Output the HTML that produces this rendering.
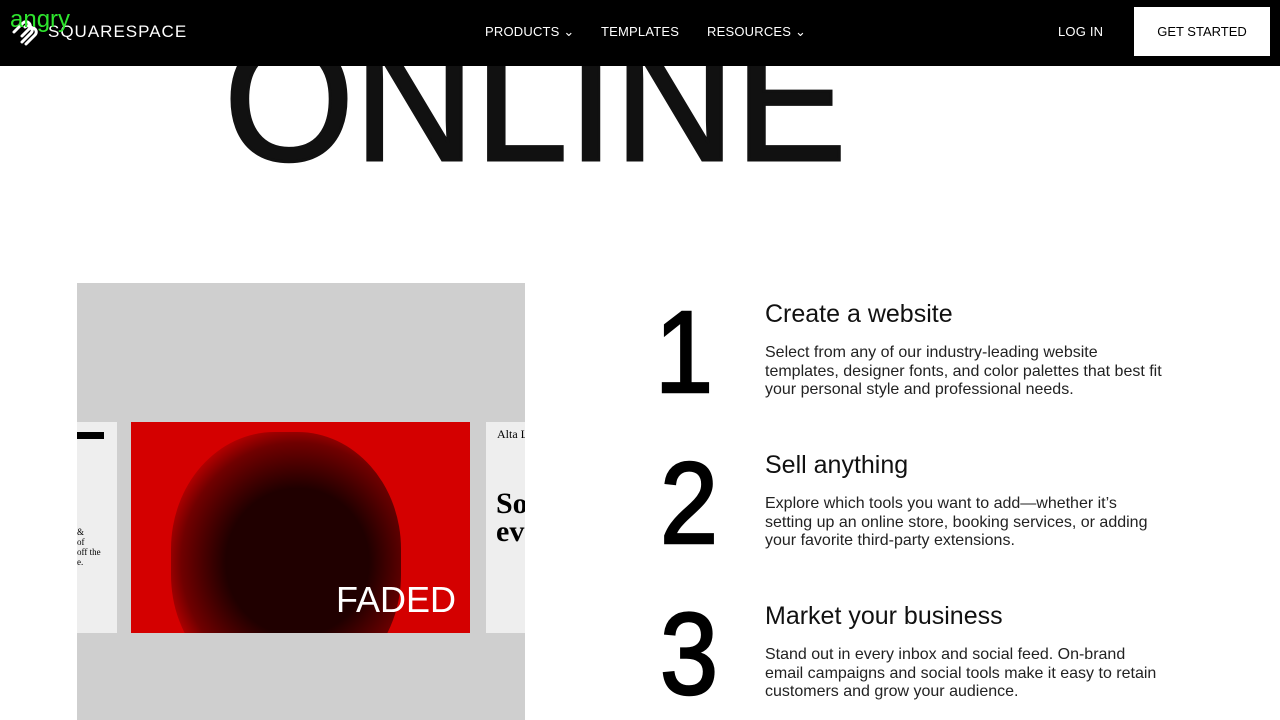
<!DOCTYPE html>
<html><head><style>
body{margin:0;width:1280px;height:720px;overflow:hidden;background:#fff;font-family:"Liberation Sans",sans-serif;position:relative}
.nav{position:absolute;left:0;top:0;width:1280px;height:66px;background:#000;color:#fff;z-index:2}
.nav span{position:absolute;font-size:13px;top:24px;letter-spacing:.2px}
.big{position:absolute;left:224px;top:12px;font-size:176px;line-height:1;letter-spacing:0px;color:#111;-webkit-text-stroke:3px #111;transform:scaleX(0.95);transform-origin:left;white-space:nowrap}
.panel{position:absolute;left:77px;top:283px;width:448px;height:437px;background:#cfcfcf}
.num{position:absolute;font-size:116px;color:#000;line-height:1;-webkit-text-stroke:2.5px #000;transform:scaleX(0.9);transform-origin:left}
h3{position:absolute;margin:0;font-weight:normal;font-size:25px;left:765px;color:#111}
p{position:absolute;margin:0;left:765px;width:401px;font-size:16px;line-height:18.5px;color:#222}
</style></head><body>
<div class="nav">
<svg style="position:absolute;left:10px;top:18px" width="34" height="28" viewBox="0 0 34 28"><g fill="none" stroke="#fff" stroke-width="3" stroke-linecap="round"><path d="M4 14l9-9a4 4 0 0 1 6 6l-7 7"/><path d="M12 24l9-9a4 4 0 0 0-6-6"/><path d="M16 26l9-9a4 4 0 0 0-6-6"/></g></svg>
<span style="left:48px;top:22px;font-size:17px;letter-spacing:1px">SQUARESPACE</span>
<div style="position:absolute;left:10px;top:6px;color:#2ee52e;font-size:24px">angry</div>
<span style="left:485px">PRODUCTS ⌄</span>
<span style="left:601px">TEMPLATES</span>
<span style="left:707px">RESOURCES ⌄</span>
<span style="left:1058px">LOG IN</span>
<div style="position:absolute;left:1134px;top:7px;width:136px;height:49px;background:#fff;color:#000;font-size:13px;text-align:center;line-height:49px">GET STARTED</div>
</div>
<div class="big">ONLINE</div>
<div class="panel">
<div style="position:absolute;left:0;top:139px;width:40px;height:211px;background:#eee"><div style="position:absolute;left:0;top:10px;width:27px;height:7px;background:#000"></div><div style="position:absolute;left:0;top:105px;font-size:9px;font-family:'Liberation Serif';line-height:10px">&amp;<br>of<br>off the<br>e.</div></div>
<div style="position:absolute;left:54px;top:139px;width:339px;height:211px;background:#d40000;overflow:hidden">
<div style="position:absolute;left:40px;top:10px;width:230px;height:260px;border-radius:45%;background:radial-gradient(ellipse at 55% 50%,#200000 40%,#700000 65%,rgba(212,0,0,0) 80%)"></div>
<div style="position:absolute;left:205px;top:157px;color:#fff;font-size:36px">FADED</div></div>
<div style="position:absolute;left:409px;top:139px;width:39px;height:211px;background:#eee;overflow:hidden;font-family:'Liberation Serif'"><div style="position:absolute;left:11px;top:5px;font-size:12px;white-space:nowrap">Alta Le</div><div style="position:absolute;left:10px;top:68px;font-size:30px;font-weight:bold;line-height:28px">So<br>eve</div></div>
</div>
<div class="num" style="left:655px;top:294px">1</div>
<div class="num" style="left:660px;top:445px">2</div>
<div class="num" style="left:660px;top:596px">3</div>
<h3 style="top:300px">Create a website</h3>
<p style="top:344px">Select from any of our industry-leading website templates, designer fonts, and color palettes that best fit your personal style and professional needs.</p>
<h3 style="top:451px">Sell anything</h3>
<p style="top:495px">Explore which tools you want to add—whether it’s setting up an online store, booking services, or adding your favorite third-party extensions.</p>
<h3 style="top:602px">Market your business</h3>
<p style="top:646px">Stand out in every inbox and social feed. On-brand email campaigns and social tools make it easy to retain customers and grow your audience.</p>
</body></html>
